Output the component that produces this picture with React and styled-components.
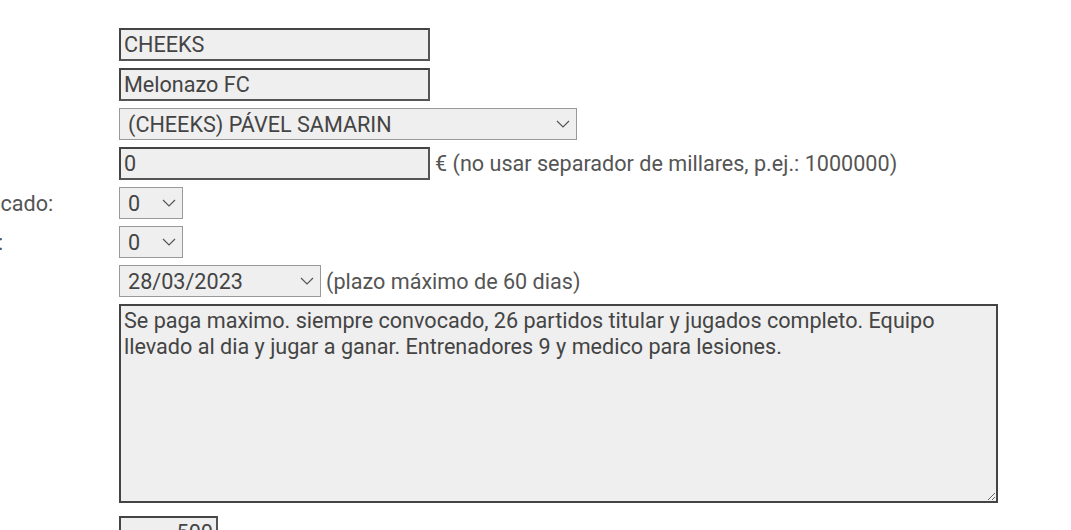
import React from "react";
import styled, { createGlobalStyle } from "styled-components";

const Global = createGlobalStyle`
  html, body { margin: 0; padding: 0; background: #fff; overflow: hidden; }
  body { font-family: Roboto, "Noto Sans", sans-serif; color: #444; }
`;

const Form = styled.form`
  display: grid;
  grid-template-columns: 257px 1fr;
  column-gap: 6px;
  row-gap: 7px;
  margin: 28px 0 0 -144px;
  align-items: center;
`;

const Label = styled.label`
  font-size: 21.6px;
  color: #555;
  white-space: nowrap;
`;

const Cell = styled.div`
  display: flex;
  align-items: center;
  gap: 5px;
`;

const TextInput = styled.input`
  box-sizing: border-box;
  width: ${(p) => p.$w || 311}px;
  height: 33px;
  border: 2px solid #444;
  border-right-color: #555;
  border-bottom-color: #555;
  background: #efefef;
  font-family: Roboto, sans-serif;
  font-size: 21.6px;
  color: #444;
  padding: 0 3px;
  text-align: ${(p) => p.$align || "left"};
  outline: none;
`;

const SelectWrap = styled.div`
  position: relative;
  display: inline-flex;
  width: ${(p) => p.$w}px;
`;

const Select = styled.select`
  box-sizing: border-box;
  appearance: none;
  -webkit-appearance: none;
  width: 100%;
  height: 32px;
  border: 1px solid #999;
  border-radius: 0;
  background-color: #efefef;
  font-family: Roboto, sans-serif;
  font-size: 21.6px;
  color: #444;
  padding: 0 24px 0 8px;
  outline: none;
`;

const Chevron = styled.svg`
  position: absolute;
  right: 7px;
  top: 50%;
  margin-top: -4px;
  width: 14px;
  height: 8px;
  pointer-events: none;
`;

const Note = styled.span`
  font-size: 21.6px;
  color: #555;
  white-space: nowrap;
`;

const TextArea = styled.textarea`
  box-sizing: border-box;
  width: 879px;
  height: 199px;
  border: 2px solid #444;
  background: #efefef;
  font-family: Roboto, sans-serif;
  font-size: 21.6px;
  line-height: 26px;
  color: #444;
  padding: 2px 3px;
  resize: both;
  outline: none;
`;

const LastCell = styled(Cell)`
  margin-top: 6px;
`;

function Dropdown({ w, value }) {
  return (
    <SelectWrap $w={w}>
      <Select defaultValue="v">
        <option value="v">{value}</option>
      </Select>
      <Chevron viewBox="0 0 14 8" fill="none">
        <path d="M1 1 L7 7 L13 1" stroke="#555" strokeWidth="1.2" />
      </Chevron>
    </SelectWrap>
  );
}

export default function App() {
  return (
    <>
      <Global />
      <Form>
        <Label>Club:</Label>
        <Cell><TextInput defaultValue="CHEEKS" /></Cell>

        <Label>Equipo:</Label>
        <Cell><TextInput defaultValue="Melonazo FC" /></Cell>

        <Label>Jugador:</Label>
        <Cell><Dropdown w={458} value="(CHEEKS) PÁVEL SAMARIN" /></Cell>

        <Label>Oferta:</Label>
        <Cell>
          <TextInput defaultValue="0" />
          <Note>€ (no usar separador de millares, p.ej.: 1000000)</Note>
        </Cell>

        <Label>Partidos convocado:</Label>
        <Cell><Dropdown w={64} value="0" /></Cell>

        <Label>Partidos titular:</Label>
        <Cell><Dropdown w={64} value="0" /></Cell>

        <Label>Fecha:</Label>
        <Cell>
          <Dropdown w={202} value="28/03/2023" />
          <Note>(plazo máximo de 60 dias)</Note>
        </Cell>

        <Label>Mensaje:</Label>
        <Cell>
          <TextArea defaultValue="Se paga maximo. siempre convocado, 26 partidos titular y jugados completo. Equipo llevado al dia y jugar a ganar. Entrenadores 9 y medico para lesiones." />
        </Cell>

        <Label>Clausula:</Label>
        <LastCell>
          <TextInput $w={99} $align="right" defaultValue="500" />
        </LastCell>
      </Form>
    </>
  );
}
